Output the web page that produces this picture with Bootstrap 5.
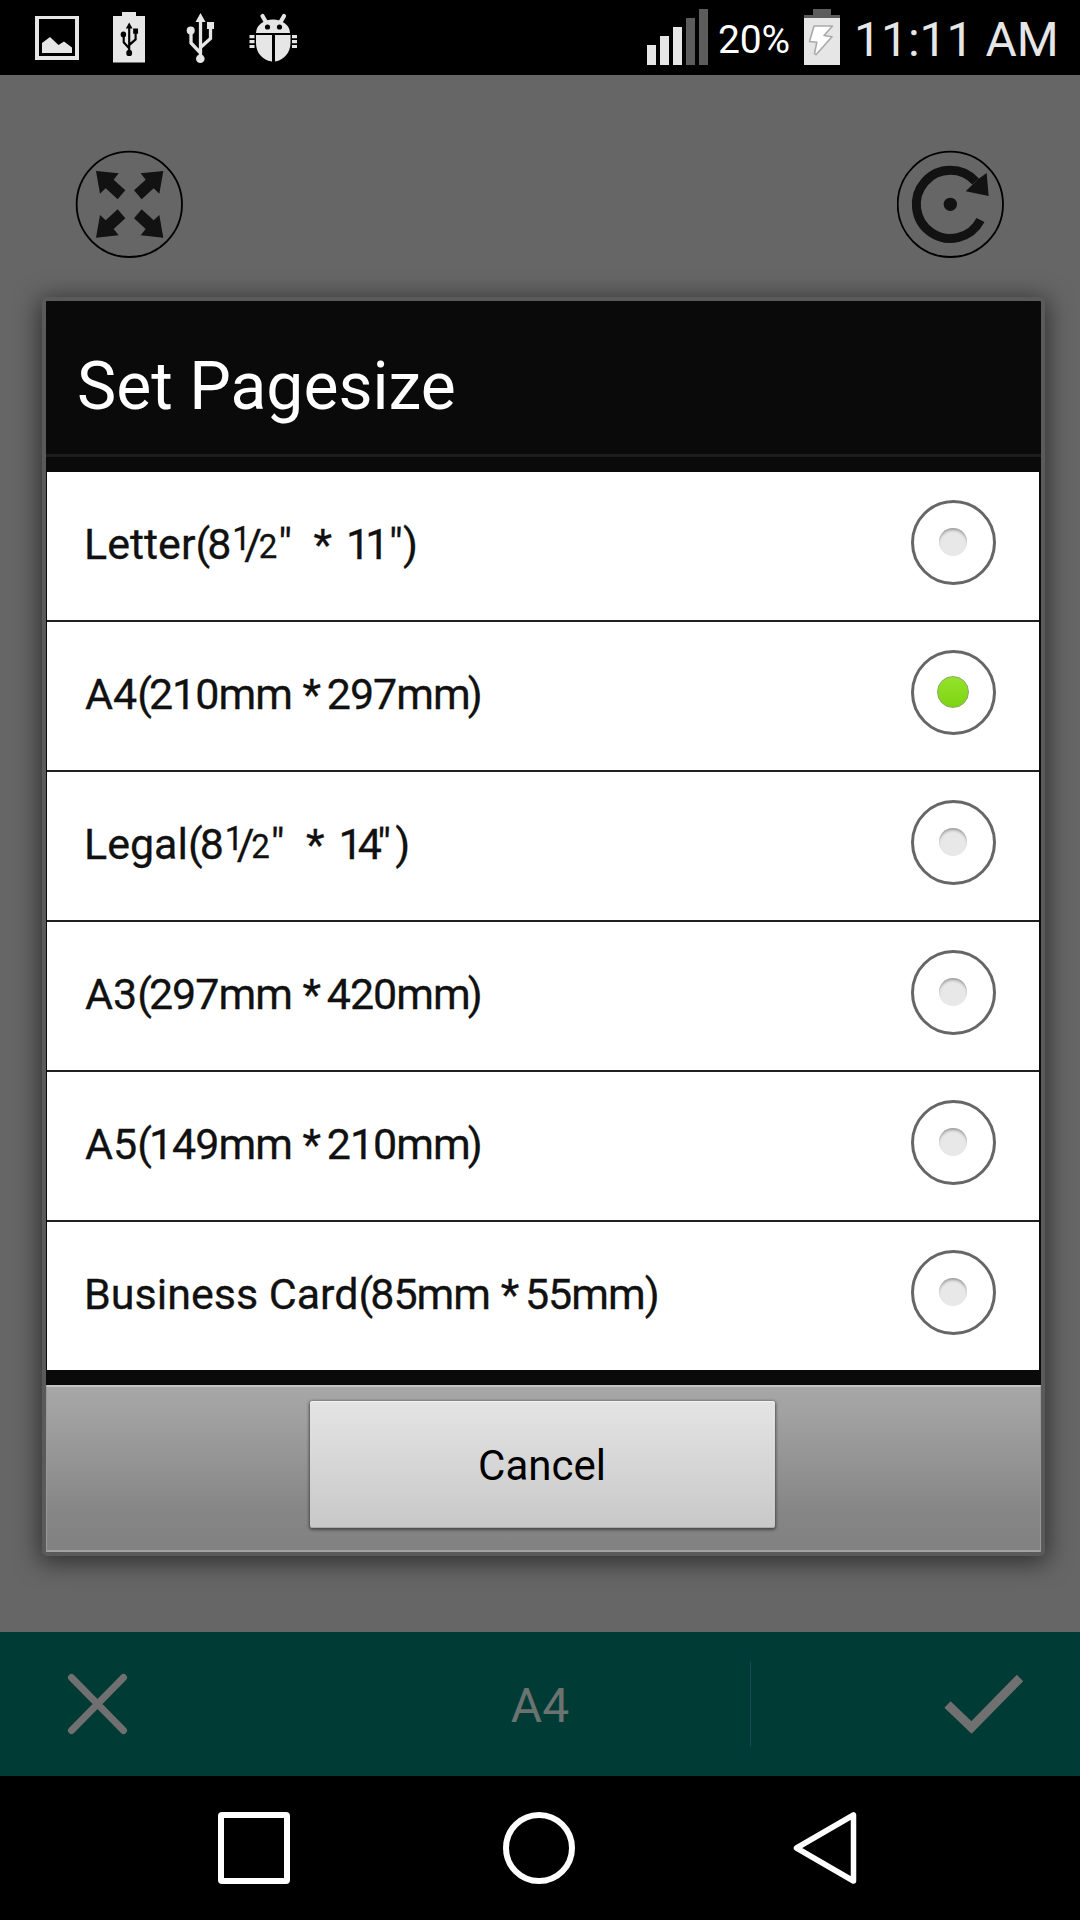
<!DOCTYPE html>
<html lang="en">
<head>
<meta charset="utf-8">
<meta name="viewport" content="width=device-width, initial-scale=1">
<title>Set Pagesize</title>
<link href="https://cdn.jsdelivr.net/npm/bootstrap@5.3.0/dist/css/bootstrap.min.css" rel="stylesheet">
<style>
body{font-family:Roboto,"Noto Sans",sans-serif;background:#000;width:1080px;height:1920px;overflow:hidden}
svg{display:block;flex:none}
.statusbar{height:75px;padding:0 24px 0 35px;color:#e6e6e6}
.statusbar svg{height:75px}
.pct{font-size:39px;line-height:80px;color:#fff;margin-left:9px;width:86px;letter-spacing:-.2px}
.clock{font-size:48px;line-height:79px;white-space:pre;margin-left:14px;width:202px}
.stage{height:1557px;background:#666;padding:75px 35px 0 42px}
.tools{padding:0 40px 0 33px}
.sheet{margin-top:39px;width:1003px;border:4px solid #5a5a5a;border-radius:5px;background:#0a0a0a;box-shadow:0 4px 24px 3px rgba(0,0,0,.52)}
.sheet-head{height:156px;padding:17px 0 0 31px;border-bottom:3px solid #1c1c1c;font-size:66px;line-height:138px;color:#fff}
.sizes{margin:15px 2px 15px 1px;border-radius:0}
.sizes .list-group-item{height:150px;padding:0 43.500px 0 38px;border:0;border-bottom:2px solid #221f20;border-radius:0;background:#fff;color:#111}
.sizes .list-group-item:last-child{height:148px;border-bottom:0}
.lbl{font-size:43px;line-height:146px;height:146px;margin-top:-4px;-webkit-text-stroke:.3px #111}
.lbl>span{white-space:pre;flex:none}
.word{margin-left:-1px}
.paren{margin-right:-3px}
.qty{letter-spacing:-1px}
.star{margin-right:-5px}
.end{margin-left:-2px}
.num{font-size:33px}
.num-up{margin:-5px 0 0 1px;width:12px}
.num-low{line-height:152px;margin-left:-1.500px;width:19.500px}
.slash{width:16px}
.inches{margin-left:14px;letter-spacing:-4.800px}
.ring{width:85px;height:85px;border:3.500px solid #666;border-radius:50%;margin-top:-8px}
.dot{width:28px;height:28px;border-radius:50%;background:#e8e8e8;box-shadow:inset 0 3px 3px -1px #999}
.dot-on{width:32px;height:32px;background:linear-gradient(#94e32b,#7dd411);border:1.500px solid #8ba765;box-shadow:none}
.sheet-foot{height:167px;padding-top:14px;border-top:2px solid #c4c4c4;border-bottom:2px solid #a2a2a2;border-left:1px solid #999;border-right:1px solid #999;background:linear-gradient(#a7a7a7,#a0a0a0 20%,#868686 75%,#818181)}
.btn-cancel{width:465px;height:127px;margin-right:3px;border:0;border-radius:3px;padding:2px 0 0;font-size:42px;color:#000;background:linear-gradient(#e4e4e4,#c8c8c8);box-shadow:inset 0 1px 0 #f2f2f2,inset 0 -1px 0 #aaa,0 1px 3px 1px rgba(40,40,40,.65)}
.actionbar{height:144px;background:#003b36;color:#6b7370;font-size:48px}
.actionbar .side{width:330px;height:144px}
.actionbar .mid{width:420px;height:144px;line-height:148px}
.sep{width:1px;height:84px;background:#1d4a55}
.navkeys{height:144px;padding:0 220px 0 218px}
</style>
</head>
<body class="d-flex flex-column">
<header class="statusbar d-flex align-items-start flex-shrink-0">
  <svg width="270" viewBox="35 0 270 75" fill="#e6e6e6">
    <path fill-rule="evenodd" d="M35 16h44v44H35zM39 19v37h36V19z"/><path d="M42 53V43l8-6 8.500 8 5.500-3.500 8 6V53z"/>
    <path d="M113 16h9v-4h14v4h9v46.500h-32z"/>
    <g transform="translate(7.200 14) scale(.61 .66)" fill="#000"><path d="M200 20v38M191 32v11l9.500 9.500M210.500 28v10.500L200 47" fill="none" stroke="#000" stroke-width="3.500"/><path d="M200 13l5.500 9h-11zM206.500 22h8v8h-8z"/><circle cx="200" cy="59" r="4.800"/><circle cx="190.500" cy="31" r="4.500"/></g>
    <path d="M200.500 20v38M191 32v11l9.500 10M210.500 28v10.500L200 48" fill="none" stroke="#e6e6e6" stroke-width="3.300"/><path d="M200.500 13l5 9h-10zM207 22h7v7h-7z"/><circle cx="200.300" cy="58.700" r="4.300"/><circle cx="190.700" cy="30.500" r="4"/>
    <path d="M256 33a17 13.500 0 0 1 34 0z"/><path d="M262.500 16l4 7M284 16l-4 7" stroke="#e6e6e6" stroke-width="4.200" stroke-linecap="round"/>
    <g fill="#000"><circle cx="267.500" cy="27" r="2.600"/><circle cx="279.500" cy="27" r="2.600"/></g>
    <path d="M256 35h16v26.500C261.500 60 256 52 256 43zM275 35h15.500v8c0 9-6 17-15.500 18.500zM249.500 35h5v3.200h-5zM249.500 40h5v3.200h-5zM249.500 45h5v3h-5zM292 35h5v3.200h-5zM292 40h5v3.200h-5zM292 45h5v3h-5z"/>
  </svg>
  <svg class="ms-auto" width="62" viewBox="647 0 62 75" fill="#e6e6e6"><path d="M647 45h9v20h-9zM660 36h9v29h-9zM673 27h9v38h-9z"/><path fill="#5c5c5c" d="M686 18h9v47h-9zM699 9h9v56h-9z"/></svg>
  <div class="pct">20%</div>
  <svg width="36" viewBox="804 0 36 75"><path fill="#5c5c5c" d="M813 9h18v6h9v3h-36v-3h9z"/><path fill="#e6e6e6" d="M804 18h36v47h-36z"/><path d="M814 26h18.500L824 35.500l8 1.200-16 18-1.500-1 2.300-11.500-7.300-.7z" fill="#fff" stroke="#aaa" stroke-width="1.600" stroke-linejoin="round"/></svg>
  <div class="clock">11:11 AM</div>
</header>

<main class="stage flex-shrink-0">
  <div class="tools d-flex justify-content-between">
    <svg width="108" height="108" viewBox="-163 -163 324 324" fill="#121212"><circle r="158" fill="none" stroke="#000" stroke-width="5.500"/><path d="M-100-100l68 7-15 19 35 32-23 27-36-33-17 16zM102-100l-68 7 15 19-35 32 23 27 36-33 17 16zM-100 100l68-7-15-19 35-32-23-27-36 33-17-16zM102 100l-68-7 15-19-35-32 23-27 36 33 17-16z"/></svg>
    <svg width="108" height="108" viewBox="-160 -163 324 324" fill="#121212"><circle r="158" fill="none" stroke="#000" stroke-width="5.500"/><path d="M90.500 47.100A102 102 0 1 1 75.800-68.200" fill="none" stroke="#121212" stroke-width="27"/><path d="M109-94l6 69-69-14 38-37z"/><circle r="20"/></svg>
  </div>

  <section class="sheet">
    <div class="sheet-head">Set Pagesize</div>
    <div class="list-group sizes">
      <div class="list-group-item d-flex align-items-center justify-content-between"><div class="lbl d-flex"><span class="word">Letter</span><span class="paren">(</span><span>8</span><span class="num num-up">1</span><span class="slash">/</span><span class="num num-low">2</span><span>"  *</span><span class="inches">11</span><span>&#8202;"</span><span>)</span></div><span class="ring d-flex align-items-center justify-content-center"><span class="dot"></span></span></div>
      <div class="list-group-item d-flex align-items-center justify-content-between"><div class="lbl d-flex"><span>A4</span><span class="paren">(</span><span class="qty">210mm</span><span class="star"> * </span><span class="qty">297mm</span><span class="end">)</span></div><span class="ring d-flex align-items-center justify-content-center"><span class="dot dot-on"></span></span></div>
      <div class="list-group-item d-flex align-items-center justify-content-between"><div class="lbl d-flex"><span class="word">Legal</span><span class="paren">(</span><span>8</span><span class="num num-up">1</span><span class="slash">/</span><span class="num num-low">2</span><span>"  *</span><span class="inches">14</span><span>"</span><span>&#8202;)</span></div><span class="ring d-flex align-items-center justify-content-center"><span class="dot"></span></span></div>
      <div class="list-group-item d-flex align-items-center justify-content-between"><div class="lbl d-flex"><span>A3</span><span class="paren">(</span><span class="qty">297mm</span><span class="star"> * </span><span class="qty">420mm</span><span class="end">)</span></div><span class="ring d-flex align-items-center justify-content-center"><span class="dot"></span></span></div>
      <div class="list-group-item d-flex align-items-center justify-content-between"><div class="lbl d-flex"><span>A5</span><span class="paren">(</span><span class="qty">149mm</span><span class="star"> * </span><span class="qty">210mm</span><span class="end">)</span></div><span class="ring d-flex align-items-center justify-content-center"><span class="dot"></span></span></div>
      <div class="list-group-item d-flex align-items-center justify-content-between"><div class="lbl d-flex"><span class="word">Business Card</span><span class="paren">(</span><span class="qty">85mm</span><span class="star"> * </span><span class="qty">55mm</span><span>)</span></div><span class="ring d-flex align-items-center justify-content-center"><span class="dot"></span></span></div>
    </div>
    <div class="sheet-foot d-flex justify-content-center align-items-start"><button type="button" class="btn btn-cancel">Cancel</button></div>
  </section>
</main>

<div class="actionbar d-flex align-items-center flex-shrink-0">
  <div class="side d-flex align-items-center"><svg width="200" height="144" viewBox="0 0 200 144"><path d="M71.500 45.500l52 53M123.500 45.500l-52 53" stroke="#707070" stroke-width="7" stroke-linecap="round"/></svg></div>
  <div class="mid text-center">A4</div>
  <div class="sep"></div>
  <svg class="ms-auto" width="200" height="144" viewBox="880 0 200 144"><path d="M947.500 72.500l24 23L1020 46" fill="none" stroke="#707070" stroke-width="9"/></svg>
</div>

<nav class="navkeys d-flex align-items-center justify-content-between flex-shrink-0">
  <svg width="72" height="72" fill="none" stroke="#fff" stroke-width="6"><rect x="3" y="3" width="66" height="66" rx="1"/></svg>
  <svg width="72" height="72" fill="none" stroke="#fff" stroke-width="6"><circle cx="36" cy="36" r="33"/></svg>
  <svg width="72" height="72" fill="none" stroke="#fff" stroke-width="5.500" stroke-linejoin="round"><path d="M65.500 3v66L8.500 36z"/></svg>
</nav>
<script src="https://cdn.jsdelivr.net/npm/bootstrap@5.3.0/dist/js/bootstrap.bundle.min.js"></script>
</body>
</html>
